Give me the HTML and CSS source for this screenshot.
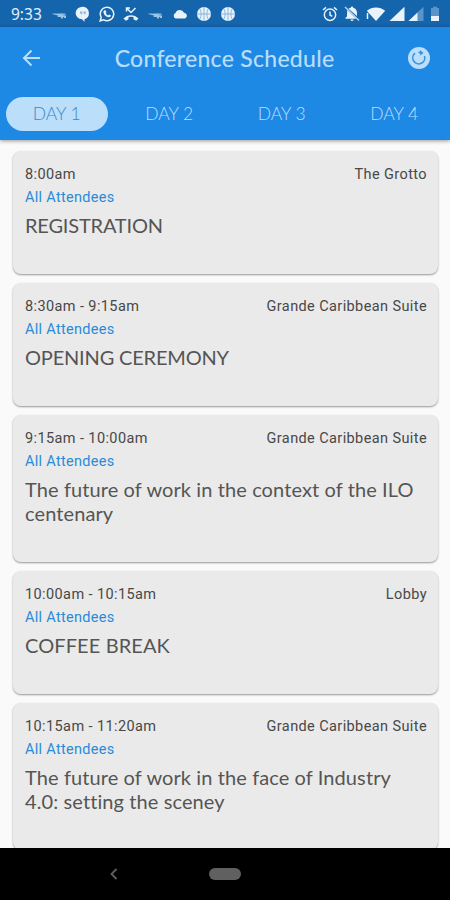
FILE: index.html
```
<!DOCTYPE html>
<html lang="en">
<head>
    <meta charset="UTF-8">
    <meta name="viewport" content="width=device-width, initial-scale=1.0">
    <title>Conference Schedule</title>
    <link rel="stylesheet" href="styles.css">
</head>
<body>
    <div class="status-bar">
        <span class="clock">9:33</span>
        <div class="notifications">
            <svg viewBox="0 0 16 16"><path class="faint" d="M1 8c2-1 4 0 6-.5h7l1 1-4 .5 4 .5V12h-2v-1h-1v1.500h-2V11H6.500l.5-1.500z"/></svg>
            <svg viewBox="0 0 16 16"><path d="M8 .8a6.800 6.200 0 0 0-1 12.500l2.500 2.500v-2.600A6.600 6.400 0 0 0 8 .8z"/><path class="cut" d="M5 5.500h2.300v2L6 9V7.500H5zM8.500 5.500h2.300v2L9.500 9V7.500h-1z"/></svg>
            <svg viewBox="0 0 16 16"><path class="line" d="M1.200 14.800l1-3.500a6.700 6.700 0 1 1 2.500 2.500z"/><path d="M5.500 4.300l1.300.1.700 1.800-.8.900c.5 1.100 1.300 1.800 2.400 2.300l.9-.9 1.800.8c.1 1.300-.8 2-1.900 2-2.800-.1-5.400-2.800-5.500-5.200 0-.8.400-1.500 1.100-1.800z"/></svg>
            <svg viewBox="0 0 16 16"><path class="line" d="M4 2.500l4 4L12.500 2M3.500 5.500V2h3.500"/><path d="M.5 12.500c4-4.500 11-4.500 15 0l-2.300 2.300-2.700-1.500V11a9 9 0 0 0-5 0v2.300l-2.700 1.500z"/></svg>
            <svg viewBox="0 0 16 16"><path class="faint" d="M1 8c2-1 4 0 6-.5h7l1 1-4 .5 4 .5V12h-2v-1h-1v1.500h-2V11H6.500l.5-1.500z"/></svg>
            <svg viewBox="0 0 16 16"><path d="M3.500 12.500a3 3 0 0 1 0-5.500 4.600 4.600 0 0 1 8.500-.3 3 3 0 0 1 1 5.800z"/></svg>
            <svg viewBox="0 0 16 16"><circle cx="8" cy="8" r="7"/><path class="grid" d="M8 1v14M1 8h14M4 3c1.500 3 1.500 7 0 10M12 3c-1.500 3-1.500 7 0 10"/></svg>
            <svg viewBox="0 0 16 16"><circle cx="8" cy="8" r="7"/><path class="grid" d="M8 1v14M1 8h14M4 3c1.500 3 1.500 7 0 10M12 3c-1.500 3-1.500 7 0 10"/></svg>
        </div>
        <div class="system">
            <svg class="alarm" viewBox="0 0 16 16"><circle class="line" cx="8" cy="8.700" r="5.700"/><path class="line" d="M8 5.500V9l2.300 1.300M1 4l3-2.600M15 4l-3-2.600"/></svg>
            <svg class="bell" viewBox="0 0 16 16"><path d="M4.500 2.700C5.300 2.200 6 2 6.800 1.800a1.200 1.200 0 0 1 2.400 0C12 2.500 13 4.500 13 7v3zM3.200 4l9 8.800H1.500v-1L3 10.500zM6.500 13.500h3a1.500 1.500 0 0 1-3 0z"/><path class="slash" d="M1 1l14 13.500"/></svg>
            <svg class="wifi" viewBox="0 0 20 16"><path d="M.8 4.800C6 .3 14 .3 19.200 4.800L10 15z"/><path class="line" d="M1.500 7v6"/></svg>
            <svg class="signal" viewBox="0 0 16 16"><path d="M15.500.800v14.200H.5z"/></svg>
            <svg class="signal" viewBox="0 0 16 16"><path class="dim" d="M15.500.800v14.200H.5z"/><path d="M9.500 6.500v8.500H.5z"/></svg>
            <svg class="battery" viewBox="0 0 16 16"><path class="dim" d="M6 .8h4V2h2v13H4V2h2z"/><path d="M4 10h8v5H4z"/></svg>
        </div>
    </div>
    <header>
        <div class="toolbar">
            <svg class="back" viewBox="0 0 20 20"><path d="M19 10H3M10.500 2.500L3 10l7.500 7.500"/></svg>
            <h1>Conference Schedule</h1>
            <svg class="refresh" viewBox="0 0 22 22"><circle cx="11" cy="11" r="11"/><path d="M7 6.200A6 6 0 1 0 16.500 9M10.500 5.200L14 6"/><path class="tip" d="M12 3l3.500 3-3.500 2.500z"/></svg>
        </div>
        <nav>
            <a class="tab active">DAY 1</a>
            <a class="tab">DAY 2</a>
            <a class="tab">DAY 3</a>
            <a class="tab">DAY 4</a>
        </nav>
    </header>
    <main>
        <div class="card">
            <div class="row"><span>8:00am</span><span>The Grotto</span></div>
            <div class="group">All Attendees</div>
            <h2 class="caps">REGISTRATION</h2>
        </div>
        <div class="card">
            <div class="row"><span>8:30am - 9:15am</span><span>Grande Caribbean Suite</span></div>
            <div class="group">All Attendees</div>
            <h2 class="caps">OPENING CEREMONY</h2>
        </div>
        <div class="card">
            <div class="row"><span>9:15am - 10:00am</span><span>Grande Caribbean Suite</span></div>
            <div class="group">All Attendees</div>
            <h2>The future of work in the context of the ILO centenary</h2>
        </div>
        <div class="card">
            <div class="row"><span>10:00am - 10:15am</span><span>Lobby</span></div>
            <div class="group">All Attendees</div>
            <h2>COFFEE BREAK</h2>
        </div>
        <div class="card">
            <div class="row"><span>10:15am - 11:20am</span><span>Grande Caribbean Suite</span></div>
            <div class="group">All Attendees</div>
            <h2>The future of work in the face of Industry 4.0: setting the sceney</h2>
        </div>
    </main>
    <footer>
        <svg class="nav-back" viewBox="0 0 8 12"><path d="M6.500 1L1.500 6l5 5"/></svg>
        <div class="home"></div>
    </footer>
</body>
</html>
```

FILE: styles.css
```
body {
    font-family: Roboto, sans-serif;
    margin: 0;
    height: 900px;
    display: flex;
    flex-direction: column;
    overflow: hidden;
    background-color: #fafafa;
}
.status-bar {
    display: flex;
    align-items: center;
    height: 27px;
    flex-shrink: 0;
    background-color: #1565ad;
    color: #e3f0fb;
}
.clock {
    width: 36px;
    padding-left: 11px;
    font-family: "Noto Sans", sans-serif;
    font-size: 15.500px;
    line-height: 28px;
}
.status-bar svg {
    height: 16px;
    fill: #e8f3fc;
}
.status-bar .line {
    fill: none;
    stroke: #e8f3fc;
    stroke-width: 1.5;
}
.status-bar .slash {
    fill: none;
    stroke: #c3d9ee;
    stroke-width: 1.2;
}
.status-bar .faint {
    fill: #9cc4e4;
}
.status-bar .cut {
    fill: #8fb4d4;
}
.status-bar .grid {
    fill: none;
    stroke: #6c9fce;
    stroke-width: 0.7;
}
.status-bar .dim {
    fill: #5b93cb;
}
.notifications, .system {
    display: flex;
    align-items: center;
}
.notifications svg {
    width: 16px;
    margin: 0 4.050px;
}
.system {
    margin-left: auto;
    padding-right: 7px;
}
.alarm {
    width: 16px;
    margin-right: 6px;
}
.bell {
    width: 16px;
    margin-right: 6px;
}
.wifi {
    width: 20px;
    margin-right: 3px;
}
.signal {
    width: 16px;
    margin-right: 3px;
}
.battery {
    width: 16px;
}
header {
    height: 113px;
    flex-shrink: 0;
    background-color: #1e88e5;
    color: #bbdefb;
    box-shadow: 0 1px 4px rgba(0, 0, 0, 0.4);
    z-index: 1;
}
.toolbar {
    display: flex;
    align-items: center;
    justify-content: space-between;
    height: 62px;
    padding: 0 20px 0 21px;
}
.back {
    width: 20px;
    height: 20px;
    fill: none;
    stroke: #bbdefb;
    stroke-width: 2;
}
.refresh {
    width: 22px;
    height: 22px;
    fill: #bbdefb;
}
.refresh path {
    fill: none;
    stroke: #3d91dc;
    stroke-width: 1.6;
}
.refresh .tip {
    fill: #3d91dc;
    stroke: none;
}
h1 {
    margin: 0;
    font-family: Lato, sans-serif;
    font-size: 23px;
    font-weight: 400;
    line-height: 28px;
    letter-spacing: 0.3px;
    -webkit-text-stroke: 0.2px #bbdefb;
}
nav {
    display: grid;
    grid-template-columns: repeat(4, 1fr);
    padding-top: 8px;
}
.tab {
    height: 34px;
    margin: 0 5px 0 6px;
    border-radius: 17px;
    font-family: Lato, sans-serif;
    font-size: 17.500px;
    font-weight: 300;
    line-height: 34px;
    text-align: center;
}
.tab.active {
    background-color: #bbdefb;
    color: #3a8ac8;
}
main {
    flex: 1;
    min-height: 0;
    overflow: hidden;
    padding: 10.600px 12px 0 13px;
}
.card {
    box-sizing: border-box;
    min-height: 123.500px;
    margin-bottom: 8.900px;
    padding: 13px 11px 36.500px 12px;
    border-radius: 8px;
    background-color: #eaeaea;
    box-shadow: 0 1px 2px rgba(0, 0, 0, 0.4);
}
.row {
    display: flex;
    justify-content: space-between;
    font-size: 14.500px;
    line-height: 22px;
    letter-spacing: 0.4px;
    color: #484848;
}
.group {
    font-size: 14.500px;
    line-height: 24px;
    letter-spacing: 0.3px;
    color: #2b8ad8;
}
h2 {
    margin: 4px 0 0;
    padding-right: 8px;
    font-family: Lato, sans-serif;
    font-size: 20px;
    font-weight: 400;
    line-height: 23.500px;
    letter-spacing: 0.1px;
    color: #555;
}
.caps {
    letter-spacing: -0.18px;
}
footer {
    display: flex;
    align-items: center;
    height: 52px;
    flex-shrink: 0;
    background-color: #000;
}
.nav-back {
    width: 8px;
    height: 12px;
    margin-left: 110px;
    fill: none;
    stroke: #606060;
    stroke-width: 1.8;
}
.home {
    width: 32px;
    height: 12px;
    margin-left: 91px;
    border-radius: 6px;
    background-color: #606060;
}
```
